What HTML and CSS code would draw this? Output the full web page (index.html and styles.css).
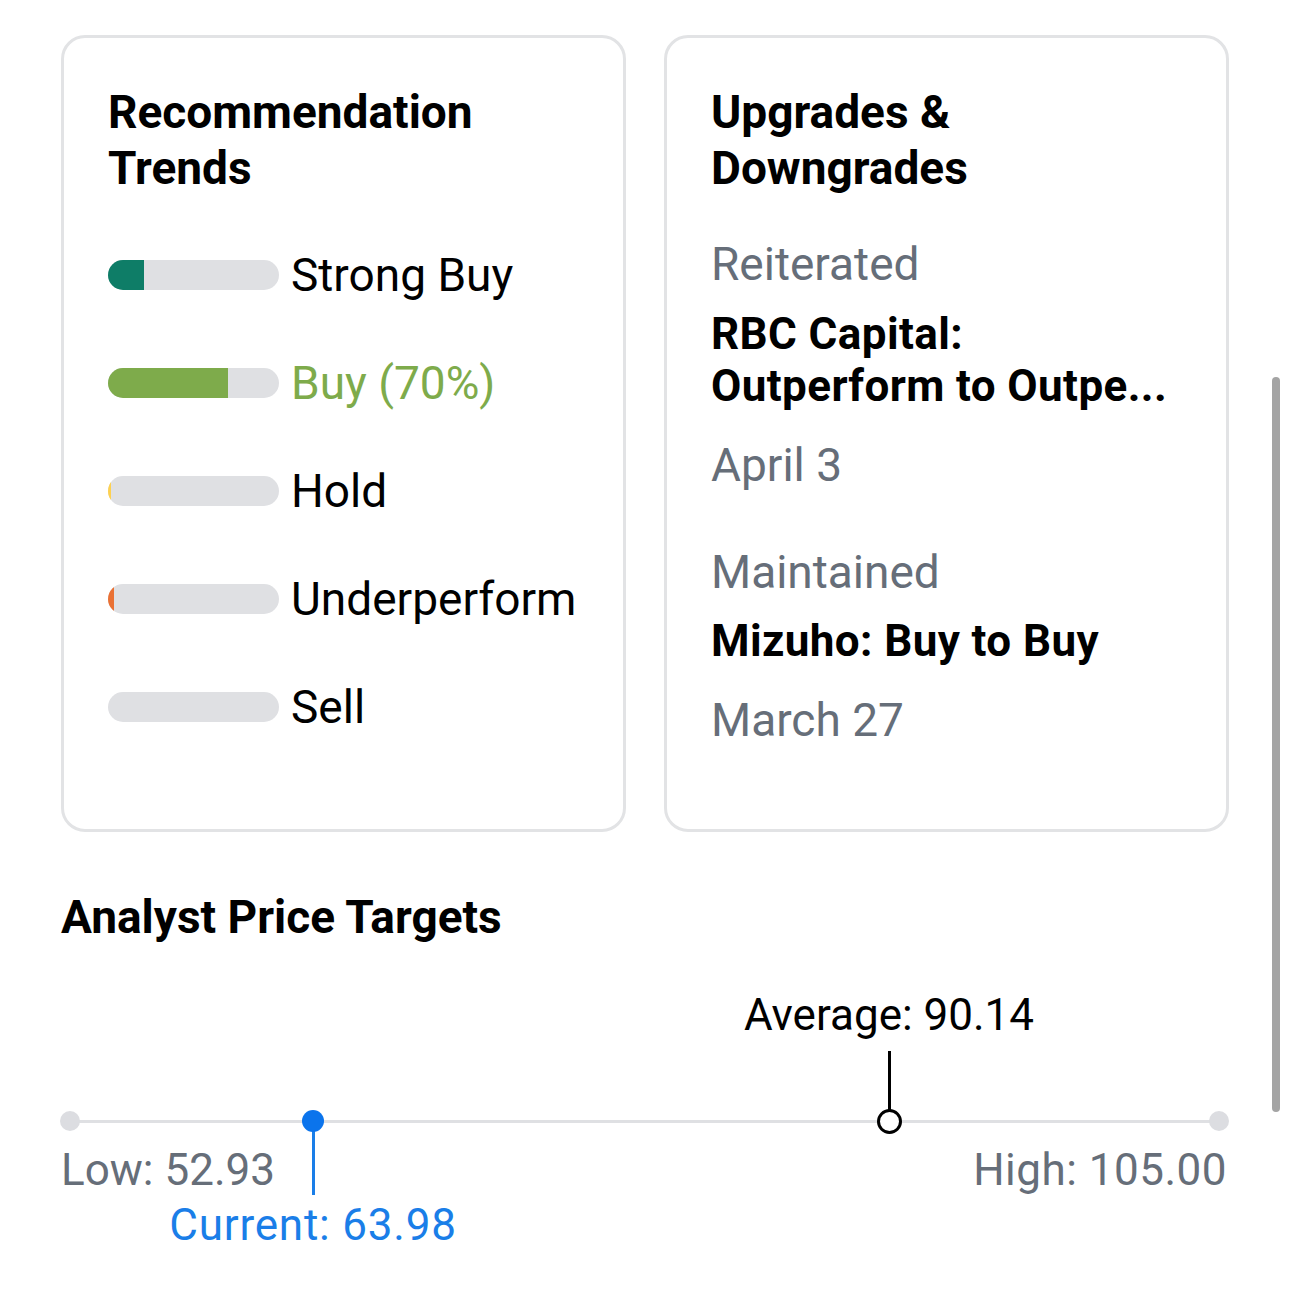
FILE: index.html
```html
<!DOCTYPE html>
<html lang="en">
<head>
<meta charset="utf-8">
<title>Analyst Insights</title>
<link rel="stylesheet" href="styles.css">
</head>
<body>
<div class="page">
  <div class="cards">
    <section class="card">
      <h2 class="card-title">Recommendation Trends</h2>
      <ul class="trends">
        <li class="trend">
          <span class="track"><span class="fill fill-strong" style="width:21%"></span></span>
          <span class="trend-label">Strong Buy</span>
        </li>
        <li class="trend">
          <span class="track"><span class="fill fill-buy" style="width:70%"></span></span>
          <span class="trend-label label-buy">Buy (70%)</span>
        </li>
        <li class="trend">
          <span class="track"><span class="fill fill-hold" style="width:3px"></span></span>
          <span class="trend-label">Hold</span>
        </li>
        <li class="trend">
          <span class="track"><span class="fill fill-under" style="width:6px"></span></span>
          <span class="trend-label">Underperform</span>
        </li>
        <li class="trend">
          <span class="track"></span>
          <span class="trend-label">Sell</span>
        </li>
      </ul>
    </section>
    <section class="card">
      <h2 class="card-title">Upgrades &amp; Downgrades</h2>
      <div class="rating">
        <div class="rating-action">Reiterated</div>
        <div class="rating-firm"><span class="line">RBC Capital:</span><span class="line">Outperform to Outpe...</span></div>
        <div class="rating-date">April 3</div>
      </div>
      <div class="rating rating-next">
        <div class="rating-action">Maintained</div>
        <div class="rating-firm"><span class="line">Mizuho: Buy to Buy</span></div>
        <div class="rating-date">March 27</div>
      </div>
    </section>
  </div>

  <section class="targets">
    <h2 class="targets-title">Analyst Price Targets</h2>
    <div class="chart">
      <div class="chart-track"></div>
      <span class="end-dot end-low"></span>
      <span class="end-dot end-high"></span>
      <div class="avg-label">Average: 90.14</div>
      <span class="avg-stem"></span>
      <span class="avg-ring"></span>
      <span class="cur-stem"></span>
      <span class="cur-dot"></span>
      <div class="low-label">Low: 52.93</div>
      <div class="high-label">High: 105.00</div>
      <div class="cur-label">Current: 63.98</div>
    </div>
  </section>
</div>
<div class="scrollbar"></div>
</body>
</html>
```

FILE: styles.css
```css
* { box-sizing: border-box; }

html, body {
  margin: 0;
  padding: 0;
  background: #ffffff;
}

body {
  font-family: Roboto, "Liberation Sans", Arial, sans-serif;
  color: #000000;
  width: 1290px;
  height: 1312px;
  overflow: hidden;
}

.page {
  padding: 35px 61px 0 61px;
}

.cards {
  display: grid;
  grid-template-columns: 565px 565px;
  column-gap: 38px;
}

.card {
  height: 797px;
  border: 3px solid #e2e3e5;
  border-radius: 24px;
  padding: 46px 30px 0 44px;
}

.card-title {
  margin: 0;
  font-size: 46px;
  line-height: 56px;
  font-weight: 700;
  letter-spacing: 0;
}

.trends {
  list-style: none;
  margin: 25px 0 0 0;
  padding: 0;
}

.trend {
  height: 108px;
  display: flex;
  align-items: center;
  gap: 12px;
}

.track {
  width: 171px;
  height: 30px;
  border-radius: 15px;
  background: #dfe0e3;
  overflow: hidden;
  flex: none;
  display: flex;
}

.fill { height: 100%; display: block; }
.fill-strong { background: #0e7d67; }
.fill-buy { background: #7eab4b; }
.fill-hold { background: #fed14f; }
.fill-under { background: #ea7134; }

.trend-label {
  font-size: 46px;
  line-height: 56px;
  color: #000000;
  white-space: nowrap;
}

.label-buy { color: #7eab4b; }

.rating { margin-top: 40px; }
.rating-next { margin-top: 51px; }

.rating-action,
.rating-date {
  font-size: 46px;
  line-height: 56px;
  color: #666e79;
}

.rating-firm {
  margin-top: 16px;
  font-size: 44px;
  line-height: 52px;
  font-weight: 700;
  letter-spacing: 0.4px;
}

.rating-firm .line { display: block; white-space: nowrap; }

.rating-date { margin-top: 25px; }
.rating-next .rating-firm { margin-top: 15px; }
.rating-next .rating-date { margin-top: 25px; }

.targets { margin-top: 57px; }

.targets-title {
  margin: 0;
  font-size: 46px;
  line-height: 56px;
  font-weight: 700;
}

.chart {
  position: relative;
  height: 310px;
  margin-top: 15px;
}

.chart-track {
  position: absolute;
  left: 9px;
  right: 10px;
  top: 160px;
  height: 3px;
  background: #dfe0e3;
}

.end-dot {
  position: absolute;
  width: 20px;
  height: 20px;
  border-radius: 50%;
  background: #dcdde1;
  top: 151px;
}
.end-low { left: -1px; }
.end-high { left: 1148px; }

.avg-label,
.low-label,
.high-label,
.cur-label {
  position: absolute;
  font-size: 44px;
  line-height: 56px;
  white-space: nowrap;
}

.avg-label {
  top: 27px;
  left: 828px;
  transform: translateX(-50%);
  color: #000000;
}

.avg-stem {
  position: absolute;
  left: 827px;
  top: 91px;
  width: 3px;
  height: 60px;
  background: #000000;
}

.avg-ring {
  position: absolute;
  left: 816px;
  top: 149px;
  width: 25px;
  height: 25px;
  border-radius: 50%;
  border: 3px solid #000000;
  background: #ffffff;
}

.cur-stem {
  position: absolute;
  left: 251px;
  top: 161px;
  width: 3px;
  height: 74px;
  background: #1a7ee8;
}

.cur-dot {
  position: absolute;
  left: 241px;
  top: 150px;
  width: 22px;
  height: 22px;
  border-radius: 50%;
  background: #0b74ec;
}

.low-label {
  top: 182px;
  left: 0;
  color: #666e79;
}

.high-label {
  top: 182px;
  right: 2px;
  color: #666e79;
  letter-spacing: 0.5px;
}

.cur-label {
  top: 237px;
  left: 252px;
  transform: translateX(-50%);
  color: #1a7ee8;
  letter-spacing: 0.8px;
}

.scrollbar {
  position: fixed;
  left: 1272px;
  top: 377px;
  width: 8px;
  height: 735px;
  border-radius: 4px;
  background: #a4a4a4;
}
```
